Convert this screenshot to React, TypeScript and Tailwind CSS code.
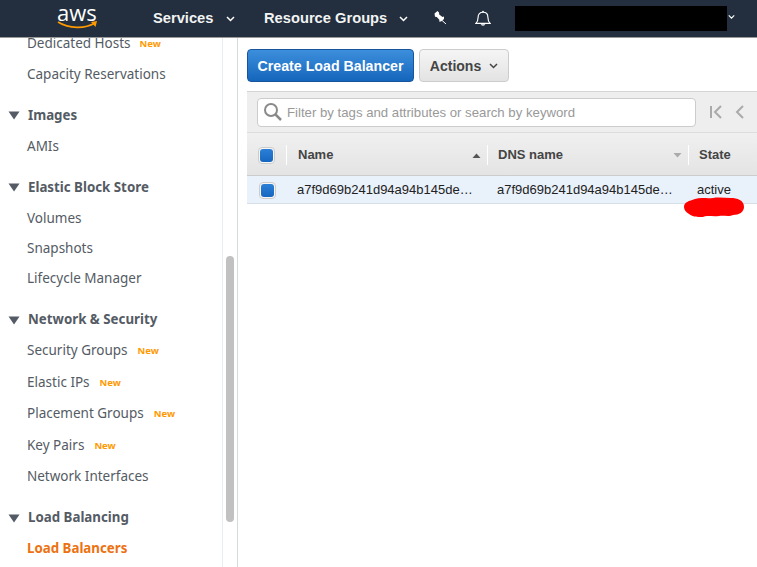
import React from "react";

function Tri() {
  return (
    <svg width="12" height="9" viewBox="0 0 12 9" className="shrink-0">
      <path d="M0.5 0.5H11.5L6 8.5Z" fill="#545b64" />
    </svg>
  );
}

function Chev({ color = "#fff", w = 9 }: { color?: string; w?: number }) {
  return (
    <svg width={w} height="6" viewBox="0 0 9 6">
      <path d="M1 1L4.5 4.5L8 1" fill="none" stroke={color} strokeWidth="1.5" />
    </svg>
  );
}

function Item({ label, isNew, gap, h }: { label: string; isNew?: boolean; gap?: string; h: string }) {
  return (
    <div className={`flex items-center pl-[27px] text-[13.5px] text-[#545b64] ${h}`}>
      <span>{label}</span>
      {isNew && <span className={`font-bold text-[9.5px] text-[#ff9900] mt-[2px] ${gap}`}>New</span>}
    </div>
  );
}

function Head({ label, box = "h-[31px] mt-[10px]" }: { label: string; box?: string }) {
  return (
    <div className={`flex items-center pl-[8px] gap-[8px] text-[13.3px] font-bold text-[#545b64] ${box}`}>
      <Tri />
      <span>{label}</span>
    </div>
  );
}

function Box() {
  return (
    <div className="w-[17px] h-[17px] rounded-[4px] bg-[#f6f6f6] border border-[#ccc] flex items-center justify-center">
      <div className="w-[13px] h-[13px] rounded-[3px] bg-gradient-to-b from-[#2b80d6] to-[#1666c0]" />
    </div>
  );
}

function Divider() {
  return <div className="w-[1px] h-[20px] bg-white" />;
}

export default function App() {
  return (
    <div className="relative w-[757px] h-[567px] overflow-hidden bg-white font-['Noto_Sans',sans-serif]">
      <header className="flex items-center h-[38px] bg-[#232f3e] border-b border-[#999] text-white font-['Liberation_Sans',sans-serif] font-bold text-[14.7px]">
        <div className="relative w-[153px] h-full shrink-0">
          <span className="absolute left-[57px] top-[-3px] leading-[30px] text-[22px] font-normal font-['Open_Sans',sans-serif]">aws</span>
          <svg width="42" height="10" viewBox="0 0 42 10" className="absolute left-[57px] top-[20px]">
            <path d="M1 2C12 9 28 9 38 3" fill="none" stroke="#ff9900" strokeWidth="1.6" />
            <path d="M34 2L40 1L38.5 7" fill="#ff9900" />
          </svg>
        </div>
        <span className="w-[73px] text-[#f2f3f3]">Services</span>
        <Chev />
        <span className="ml-[29px] text-[#f2f3f3]">Resource Groups</span>
        <span className="ml-[12px]"><Chev /></span>
        <svg width="14" height="15" viewBox="0 0 14 15" className="ml-[25px] mb-[2px]">
          <path d="M1.5 3.5L4.5 1L6 2.5L6.2 4.5L9.5 7L11 6.5L11 9L8 11.5L6 11.5L6.5 10L3.8 7L2 6.8Z" fill="#fff" />
          <path d="M8 9.5L13 14" stroke="#fff" strokeWidth="1" />
        </svg>
        <svg width="16" height="17" viewBox="0 0 18 19" className="ml-[28px]">
          <path d="M1 15C3 13 3.5 11 3.5 8C3.5 4.5 5.5 2.5 9 2.5C12.5 2.5 14.5 4.5 14.5 8C14.5 11 15 13 17 15Z" fill="none" stroke="#fff" strokeWidth="1.3" />
          <path d="M6.5 16C7 18.2 11 18.2 11.5 16Z" fill="#fff" />
          <circle cx="9" cy="1.7" r="1" fill="#fff" />
        </svg>
        <div className="ml-[24px] w-[212px] h-[25px] bg-black" />
        <span className="ml-[1px] mb-[3px]"><Chev w={7} /></span>
      </header>

      <div className="flex h-[529px]">
        <aside className="w-[223px] shrink-0 border-r border-[#eaeded] overflow-hidden">
          <div className="mt-[-10px]">
            <Item label="Dedicated Hosts" isNew gap="ml-[9px]" h="h-[31px]" />
            <Item label="Capacity Reservations" h="h-[31px]" />
            <Head label="Images" />
            <Item label="AMIs" h="h-[31px]" />
            <Head label="Elastic Block Store" />
            <Item label="Volumes" h="h-[30.5px]" />
            <Item label="Snapshots" h="h-[30px]" />
            <Item label="Lifecycle Manager" h="h-[30px]" />
            <Head label="Network & Security" box="h-[30px] mt-[11.5px]" />
            <Item label="Security Groups" isNew gap="ml-[10px]" h="h-[31px]" />
            <Item label="Elastic IPs" isNew gap="ml-[10px]" h="h-[31.5px]" />
            <Item label="Placement Groups" isNew gap="ml-[10px]" h="h-[31.5px]" />
            <Item label="Key Pairs" isNew gap="ml-[10px]" h="h-[31.5px]" />
            <Item label="Network Interfaces" h="h-[31.5px]" />
            <Head label="Load Balancing" box="h-[31px] mt-[10.5px]" />
            <div className="flex items-center pl-[27px] h-[31px] text-[13.3px] font-bold text-[#ec7211]">Load Balancers</div>
          </div>
        </aside>
        <div className="w-[15px] shrink-0 bg-white relative border-r border-[#d5dbdb]">
          <div className="absolute left-[3px] top-[218px] w-[8px] h-[266px] rounded-[4px] bg-[#c1c1c1]" />
        </div>

        <main className="flex-1 min-w-0 pl-[9px] font-['Liberation_Sans',sans-serif]">
          <div className="flex gap-[5px] pt-[11px] h-[53px]">
            <button className="w-[167px] h-[33px] pt-[2px] rounded-[4px] border border-[#19559d] bg-gradient-to-b from-[#3c8fdc] to-[#1466bc] text-white font-bold text-[14.2px]">Create Load Balancer</button>
            <button className="flex items-center justify-center gap-[8px] w-[90px] h-[33px] pt-[1px] rounded-[4px] border border-[#ccc] bg-gradient-to-b from-[#f5f5f5] to-[#e3e3e3] text-[#444] font-bold text-[14px]">
              Actions
              <Chev color="#444" />
            </button>
          </div>
          <div className="flex items-center h-[41px] bg-[#eeeeee] border-t border-[#d5d5d5] pl-[10px]">
            <div className="flex items-center w-[439px] h-[29px] rounded-[4px] bg-white border border-[#ccc] pl-[5px] gap-[4px] text-[13.2px] text-[#999]">
              <svg width="20" height="20" viewBox="0 0 20 20">
                <circle cx="8" cy="8" r="6" fill="none" stroke="#8a8a8a" strokeWidth="2" />
                <path d="M12.5 12.5L18 18" stroke="#8a8a8a" strokeWidth="2.5" />
              </svg>
              <span className="pt-[1px]">Filter by tags and attributes or search by keyword</span>
            </div>
            <svg width="14" height="14" viewBox="0 0 14 14" className="ml-[13px]">
              <path d="M2 1V13" stroke="#aaa" strokeWidth="2" />
              <path d="M12 1L6 7L12 13" fill="none" stroke="#aaa" strokeWidth="2" />
            </svg>
            <svg width="10" height="14" viewBox="0 0 10 14" className="ml-[12px]">
              <path d="M8 1L2 7L8 13" fill="none" stroke="#aaa" strokeWidth="2" />
            </svg>
          </div>
          <div className="flex items-center h-[44px] pt-[2px] border-t border-[#ddd] border-b-[#ccc] border-b bg-gradient-to-b from-[#f0f0f0] to-[#e4e4e4] text-[#444] text-[13px] font-bold">
            <div className="w-[39px] pl-[11px]"><Box /></div>
            <Divider />
            <div className="flex items-center justify-between w-[200px] pl-[11px] pr-[6px]">
              <span>Name</span>
              <svg width="9" height="5" viewBox="0 0 9 5"><path d="M0.5 5L4.5 0.5L8.5 5Z" fill="#555" /></svg>
            </div>
            <Divider />
            <div className="flex items-center justify-between w-[200px] pl-[10px] pr-[6px]">
              <span>DNS name</span>
              <svg width="9" height="5" viewBox="0 0 9 5"><path d="M0.5 0L4.5 4.5L8.5 0Z" fill="#aaa" /></svg>
            </div>
            <Divider />
            <span className="pl-[10px]">State</span>
          </div>
          <div className="flex items-center h-[28px] pt-[1px] bg-[#e9f1fb] border-b border-[#d8dfe8] text-[13px] text-[#222]">
            <div className="w-[50px] pl-[12px]"><Box /></div>
            <div className="w-[200px] truncate pr-[23px]">a7f9d69b241d94a94b145de4e8a7c01</div>
            <div className="w-[200px] truncate pr-[23px]">a7f9d69b241d94a94b145de4e8a7c01</div>
            <span>active</span>
          </div>
        </main>
      </div>

      <svg width="62" height="22" viewBox="0 0 62 22" className="absolute left-[683px] top-[196px]">
        <path d="M1 11C1 6 6 5 12 3C18 1 24 3 30 2C36 1 42 2 48 2C54 2 61 4 61 11C61 16 56 19 50 19C46 21 40 19 36 20C30 21 24 19 20 21C14 21 10 21 6 18C3 16 1 14 1 11Z" fill="#ff0000" />
      </svg>
    </div>
  );
}
